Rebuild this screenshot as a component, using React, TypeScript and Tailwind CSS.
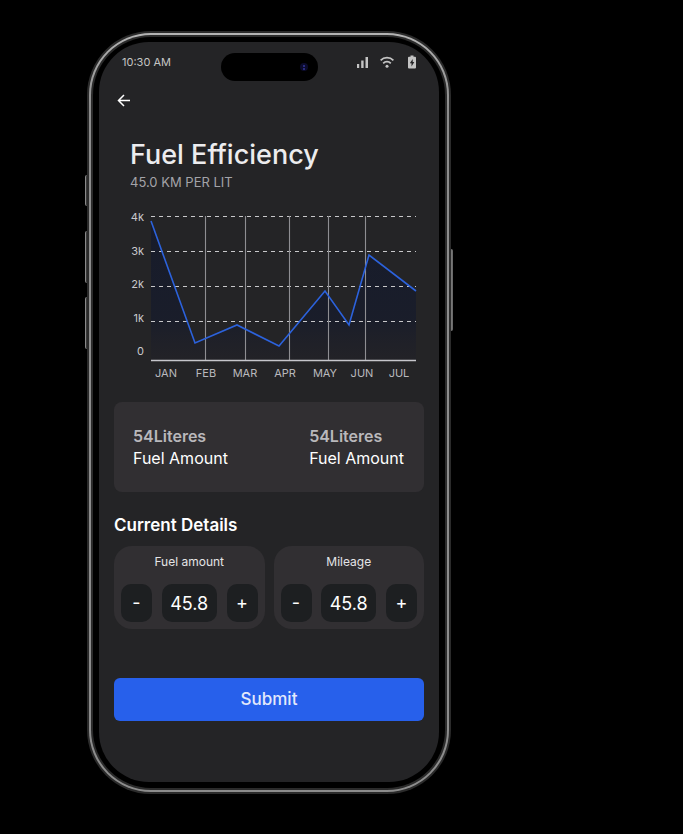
import { useId, useState } from "react";

const months = [
  { name: "JAN", x: 36 },
  { name: "FEB", x: 76 },
  { name: "MAR", x: 115 },
  { name: "APR", x: 155 },
  { name: "MAY", x: 195 },
  { name: "JUN", x: 232 },
  { name: "JUL", x: 269 },
];

const levels = [
  { name: "4k", y: 11, line: 6.5 },
  { name: "3k", y: 45, line: 41.5 },
  { name: "2k", y: 78, line: 76.5 },
  { name: "1k", y: 112, line: 111.5 },
];

const dividers = [75, 115, 159, 198, 235];
const trend = "21,11 65,133 107,115 149,136 195,81 219,115 239,45 286,81";

function StatusBar() {
  return (
    <div className="grid h-[39px] grid-cols-[1fr_97px_1fr] items-end text-[#c4c4c4]">
      <span className="pb-[10px] pl-[23px] text-[11px] leading-[18px]">10:30 AM</span>
      <div className="flex h-7 items-center justify-end rounded-full bg-black pr-[10px]">
        <span className="flex size-2 flex-col items-center justify-center gap-px rounded-full bg-[#0b0b2c]">
          <span className="size-[2px] rounded-full bg-[#34379a]" />
          <span className="size-[2px] rounded-full bg-[#34379a]" />
        </span>
      </div>
      <div className="flex items-center justify-end gap-3 pr-[23px] pb-3">
        <svg className="h-[14px] w-[11px]" viewBox="0 0 11 14" fill="currentColor" aria-hidden="true">
          <path d="M0 9h2.200v4H0zM4.200 5.500h2.400v7.500H4.200zM8.500 2h2.500v11H8.500z" />
        </svg>
        <svg className="h-[14px] w-[14px]" viewBox="0 0 14 14" fill="none" stroke="currentColor" strokeWidth="1.8" aria-hidden="true">
          <path d="M0.600 5.300a9 9 0 0 1 12.800 0M3.200 8.300a5.300 5.300 0 0 1 7.600 0" />
          <circle cx="7" cy="11.200" r="1.500" fill="currentColor" stroke="none" />
        </svg>
        <svg className="ml-[2px] h-[14px] w-2" viewBox="0 0 8 14" aria-hidden="true">
          <path d="M2.5 0.5h3v1.2H7a1 1 0 0 1 1 1V12.500a1 1 0 0 1-1 1H1a1 1 0 0 1-1-1V2.700a1 1 0 0 1 1-1h1.500z" fill="currentColor" />
          <path d="M4.700 4L1.800 8.300h1.700V11.500l2.800-4.500H4.700z" fill="#242426" />
        </svg>
      </div>
    </div>
  );
}

function Chart() {
  const fill = useId();
  return (
    <svg className="mt-5 block w-full" viewBox="0 0 294 170" role="img" aria-label="Fuel efficiency by month">
      <defs>
        <linearGradient id={fill} x1="0" y1="0" x2="0" y2="1">
          <stop offset="0" stopColor="#0a1330" stopOpacity="0.5" />
          <stop offset="0.7" stopColor="#0a1330" stopOpacity="0.4" />
          <stop offset="1" stopColor="#1c1c2c" stopOpacity="0.2" />
        </linearGradient>
      </defs>
      <polygon points={`21,150 ${trend} 286,150`} fill={`url(#${fill})`} />
      {levels.map((level) => (
        <line key={level.name} x1="21" x2="286" y1={level.line} y2={level.line} stroke="#c8c8ca" strokeWidth="1.1" strokeDasharray="4 4" />
      ))}
      {dividers.map((x) => (
        <line key={x} x1={x + 0.5} x2={x + 0.5} y1="6" y2="150" stroke="#8e8e92" strokeWidth="1.1" />
      ))}
      <line x1="21" x2="286" y1="150.500" y2="150.500" stroke="#c6c6cb" strokeWidth="1.300" />
      <polyline points={trend} fill="none" stroke="#2c62dc" strokeWidth="1.600" />
      <g fill="#c9c9cc" fontSize="11" textAnchor="end">
        {levels.map((level) => (
          <text key={level.name} x="14" y={level.y}>{level.name}</text>
        ))}
        <text x="14" y="145">0</text>
      </g>
      <g fill="#b9b9bd" fontSize="11" textAnchor="middle">
        {months.map((month) => (
          <text key={month.name} x={month.x} y="167">{month.name}</text>
        ))}
      </g>
    </svg>
  );
}

function Amount() {
  return (
    <div className="text-base leading-[22px]">
      <p className="font-semibold text-[#b9b8bb]">54Literes</p>
      <p className="text-white">Fuel Amount</p>
    </div>
  );
}

function Stepper({ label }: { label: string }) {
  const [value, setValue] = useState(45.8);
  const id = useId();
  const step = "h-[38px] w-[31px] rounded-[10px] bg-[#1d1f21] text-lg text-white";
  return (
    <div className="flex-1 rounded-[18px] bg-[#312f32] px-[7px] pt-2 pb-[7px]">
      <label htmlFor={id} className="block text-center text-xs leading-4 text-[#e4e4e6]">{label}</label>
      <div className="mt-[14px] flex items-center justify-between">
        <button type="button" aria-label={`Decrease ${label}`} className={step} onClick={() => setValue(value - 0.1)}>-</button>
        <input id={id} readOnly value={value.toFixed(1)} className="h-[38px] w-[55px] rounded-[10px] bg-[#1d1f21] text-center text-lg text-white" />
        <button type="button" aria-label={`Increase ${label}`} className={step} onClick={() => setValue(value + 0.1)}>+</button>
      </div>
    </div>
  );
}

export default function App() {
  return (
    <div className="min-h-screen bg-black pt-[31px] pb-10 font-['Inter','Liberation_Sans',sans-serif] sm:pl-[87px]">
      <div className="relative w-full max-w-[364px]">
        <span className="absolute top-[144px] -left-[2px] h-[31px] w-[3px] rounded-l-xs border-l border-[#8a8a8a] bg-[#3a3a3a]" />
        <span className="absolute top-[200px] -left-[2px] h-[52px] w-[3px] rounded-l-xs border-l border-[#8a8a8a] bg-[#3a3a3a]" />
        <span className="absolute top-[266px] -left-[2px] h-[52px] w-[3px] rounded-l-xs border-l border-[#8a8a8a] bg-[#3a3a3a]" />
        <span className="absolute top-[218px] -right-[2px] h-[82px] w-[3px] rounded-r-xs border-r border-[#6a6a6a] bg-[#777777]" />
        <div className="relative rounded-[64px] bg-[#2b2b2b] p-[2px]">
          <div className="rounded-[62px] bg-linear-to-b from-[#b4b4b4] via-[#8c8c8c] via-10% to-[#8c8c8c] p-[2px]">
            <div className="rounded-[60px] bg-[#2b2b2b] p-[2px]">
              <div className="rounded-[58px] bg-black px-[6px] pt-[5px] pb-[6px]">
                <main className="overflow-hidden rounded-[50px] bg-[#242426] pb-[61px]">
                  <StatusBar />
                  <div className="px-[15px]">
                    <button type="button" aria-label="Back" className="mt-[11px] flex h-4 w-5 items-center justify-center text-white">
                      <svg className="h-4 w-5" viewBox="0 0 20 16" fill="none" stroke="currentColor" strokeWidth="1.500" aria-hidden="true">
                        <path d="M16 8.500H5M10 3L4.500 8.500L10 14" />
                      </svg>
                    </button>
                    <div className="px-4 pt-[31px]">
                      <h1 className="text-[27px] leading-8 font-medium text-[#ececee]">Fuel Efficiency</h1>
                      <p className="mt-[3px] text-[13px] leading-4 text-[#a3a3a8]">45.0 KM PER LIT</p>
                    </div>
                    <div className="pl-4">
                      <Chart />
                    </div>
                    <section className="mt-[22px] flex justify-between rounded-lg bg-[#312f32] py-[23px] pr-5 pl-[19px]">
                      <Amount />
                      <Amount />
                    </section>
                    <h2 className="mt-[22px] text-[17px] leading-[22px] font-semibold text-white">Current Details</h2>
                    <div className="mt-[10px] flex gap-[9px]">
                      <Stepper label="Fuel amount" />
                      <Stepper label="Mileage" />
                    </div>
                    <button type="button" className="mt-[49px] h-[43px] w-full rounded-md bg-[#2760eb] text-[17px] font-medium text-[#e3e9fb]">Submit</button>
                  </div>
                </main>
              </div>
            </div>
          </div>
        </div>
      </div>
    </div>
  );
}
